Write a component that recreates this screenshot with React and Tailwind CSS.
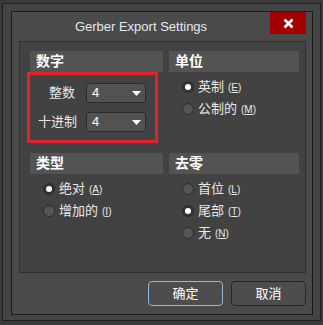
import React from "react";

const Radio = ({ checked, label, hotkey }) => (
  <div className="flex h-[22px] items-center pl-[13px]">
    <span
      className={`flex h-[12px] w-[12px] items-center justify-center rounded-full border border-[#2c2c2c] ${
        checked ? "bg-[#333333]" : "bg-[#555555]"
      }`}
    >
      {checked && <span className="h-[6px] w-[6px] rounded-full bg-white" />}
    </span>
    <span className="ml-[4px] text-[13px] text-[#e8e8e8]">{label}</span>
    <span className="ml-[4px] text-[10px] text-[#e8e8e8]">
      (<span className="underline">{hotkey}</span>)
    </span>
  </div>
);

const Header = ({ children }) => (
  <div className="flex h-[21px] items-center bg-[#535353] pl-[6px] text-[14px] font-bold text-white">
    {children}
  </div>
);

const Select = ({ value }) => (
  <div className="flex h-[20px] w-[60px] items-center justify-between rounded-[3px] border border-[#2a2a2a] bg-[#525252] pl-[5px] pr-[4px]">
    <span className="text-[13px] text-white" style={{ fontFamily: '"Liberation Sans", sans-serif' }}>
      {value}
    </span>
    <svg width="9" height="5" viewBox="0 0 9 5">
      <path d="M0 0 H9 L4.5 5 Z" fill="#ffffff" />
    </svg>
  </div>
);

const App = () => {
  return (
    <div
      className="h-[325px] w-[323px] overflow-hidden bg-[#3a3a3a] pt-[3px]"
      style={{ fontFamily: '"Liberation Sans", "Noto Sans CJK SC", sans-serif' }}
    >
      <div className="ml-[2px] h-[318px] w-[319px] border border-[#1f1f1f] bg-[#444444] pb-[5px] pl-[8px] pr-[7px] pt-[7px]">
        <div className="flex h-full flex-col border border-[#1c1c1c] bg-[#4a4a4a]">
          <div className="flex h-[29px] shrink-0">
            <div className="flex flex-1 items-center justify-center text-[13px] text-[#e4e8ee]">
              Gerber Export Settings
            </div>
            <div className="mr-[6px] flex h-[22px] w-[36px] items-center justify-center bg-[#a30000]">
              <svg width="11" height="11" viewBox="0 0 11 11">
                <path d="M1.5 1.5 L9.5 9.5 M9.5 1.5 L1.5 9.5" stroke="#ffffff" strokeWidth="2.6" />
              </svg>
            </div>
          </div>

          <div className="ml-[7px] mr-[6px] flex-1 border border-[#2f2f2f] bg-[#424242] pl-[10px] pt-[9px]">
            <div className="grid grid-cols-[133px_130px] gap-x-[6px] gap-y-[10px]">
              <div>
                <Header>数字</Header>
                <div className="-ml-[3px] flex h-[71px] w-[131px] flex-col gap-[9px] border-[3px] border-[#e3212b] pt-[8px]">
                  <div className="flex items-center">
                    <span className="w-[45px] text-right text-[13px] text-[#e8e8e8]">整数</span>
                    <span className="ml-[11px]">
                      <Select value="4" />
                    </span>
                  </div>
                  <div className="flex items-center">
                    <span className="w-[47px] text-right text-[13px] text-[#e8e8e8]">十进制</span>
                    <span className="ml-[9px]">
                      <Select value="4" />
                    </span>
                  </div>
                </div>
              </div>

              <div>
                <Header>单位</Header>
                <div className="mt-[4px]">
                  <Radio checked label="英制" hotkey="E" />
                  <Radio label="公制的" hotkey="M" />
                </div>
              </div>

              <div>
                <Header>类型</Header>
                <div className="mt-[4px]">
                  <Radio checked label="绝对" hotkey="A" />
                  <Radio label="增加的" hotkey="I" />
                </div>
              </div>

              <div>
                <Header>去零</Header>
                <div className="mt-[4px]">
                  <Radio label="首位" hotkey="L" />
                  <Radio checked label="尾部" hotkey="T" />
                  <Radio label="无" hotkey="N" />
                </div>
              </div>
            </div>
          </div>

          <div className="mb-[8px] mr-[6px] mt-[8px] flex shrink-0 justify-end gap-[8px]">
            <button className="h-[25px] w-[75px] rounded-[4px] border border-[#8fb8de] bg-[#4d4d4d] text-[13px] text-white">
              确定
            </button>
            <button className="h-[25px] w-[75px] rounded-[4px] border border-[#262626] bg-[#4d4d4d] text-[13px] text-white">
              取消
            </button>
          </div>
        </div>
      </div>
    </div>
  );
};

export default App;
